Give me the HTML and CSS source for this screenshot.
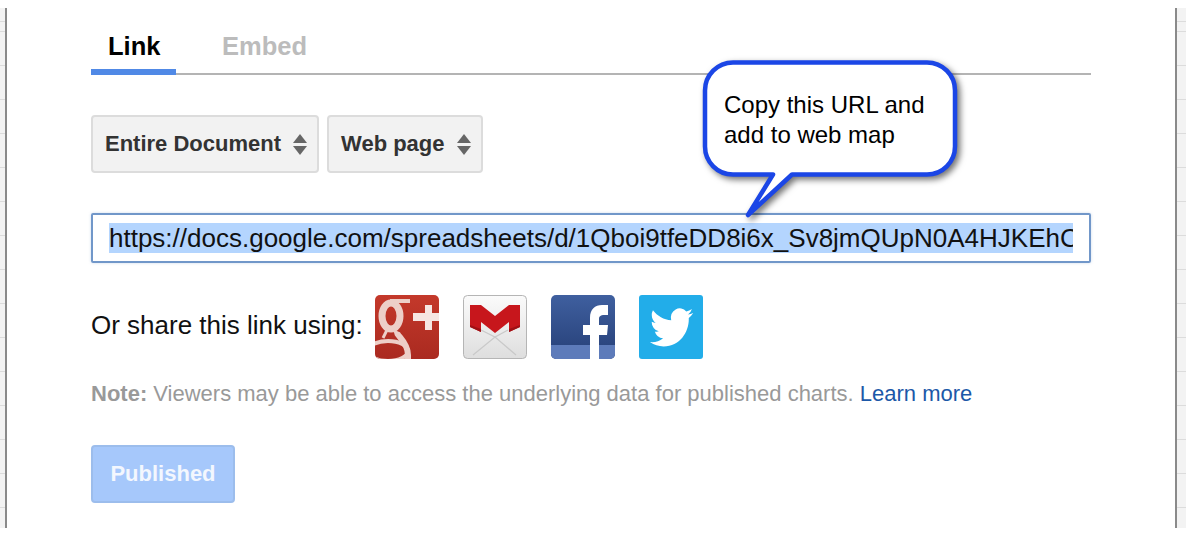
FILE: index.html
```html
<!DOCTYPE html>
<html lang="en">
<head>
<meta charset="utf-8">
<title>Publish to the web</title>
<link rel="stylesheet" href="styles.css">
</head>
<body>
<div class="sheet">
  <main class="dialog">
    <nav class="tabs">
      <a class="tab tab-active">Link</a>
      <a class="tab tab-idle">Embed</a>
    </nav>
    <div class="selects">
      <div class="select">Entire Document
        <span class="arrows"><i class="arrow-up"></i><i class="arrow-down"></i></span>
      </div>
      <div class="select">Web page
        <span class="arrows"><i class="arrow-up"></i><i class="arrow-down"></i></span>
      </div>
    </div>
    <div class="url-box">
      <div class="url-text">https://docs.google.com/spreadsheets/d/1Qboi9tfeDD8i6x_Sv8jmQUpN0A4HJKEhC</div>
    </div>
    <div class="share">
      <span class="share-label">Or share this link using:</span>
      <div class="icons">
        <svg class="icon" viewBox="0 0 64 64" aria-label="Google Plus">
          <defs>
            <linearGradient id="gp" x1="0" y1="0" x2="0" y2="1"><stop offset="0" stop-color="#c4392b"/><stop offset="1" stop-color="#aa2a20"/></linearGradient>
            <clipPath id="gpc"><rect width="64" height="64" rx="5"/></clipPath>
          </defs>
          <rect width="64" height="64" rx="5" fill="url(#gp)"/>
          <g fill="none" stroke="#edcfc8" clip-path="url(#gpc)">
            <ellipse cx="16" cy="21" rx="9" ry="13" stroke-width="7"/>
            <path d="M15 6h20" stroke-width="4"/>
            <path d="M12 35 8 43" stroke-width="3"/>
            <path d="M22 36c-2 4 11 10 11 24v4" stroke-width="6"/>
            <ellipse cx="13" cy="56" rx="20" ry="10" stroke-width="4"/>
          </g>
          <path d="M38 18h12V10h7v8h7v8h-7v9h-7v-9H38z" fill="#f6e6e2"/>
        </svg>
        <svg class="icon" viewBox="0 0 64 64" aria-label="Gmail">
          <defs><linearGradient id="gm" x1="0" y1="0" x2="0" y2="1"><stop offset="0" stop-color="#fbfbfb"/><stop offset="1" stop-color="#dedede"/></linearGradient></defs>
          <rect x=".5" y=".5" width="63" height="63" rx="4" fill="url(#gm)" stroke="#b5b5b5"/>
          <path d="M10 60 32 42 53 60M18 35 32 42 45 35" fill="none" stroke="#c9c9c9" stroke-width="1.2"/>
          <path d="M7 10h11l14 11 14-11h11v22l-11 5V27L32 38 18 27v10L7 32z" fill="#c7161c"/>
          <path d="M7 30l11 4v3L7 32zM57 30l-11 4v3l11-5z" fill="#9f1015"/>
        </svg>
        <svg class="icon" viewBox="0 0 64 64" aria-label="Facebook">
          <defs><linearGradient id="fb" x1="0" y1="0" x2="0" y2="1"><stop offset="0" stop-color="#3f5f9f"/><stop offset="1" stop-color="#263f77"/></linearGradient></defs>
          <rect width="64" height="64" rx="5" fill="url(#fb)"/>
          <path d="M0 50h64v9a5 5 0 0 1-5 5H5a5 5 0 0 1-5-5z" fill="#5d7bba"/>
          <path d="M39 64V40h-7V30h7v-7c0-9 5-13 12-13h6v10h-4c-3 0-5 1-5 4v6h9l-1 10h-8v24z" fill="#fff"/>
        </svg>
        <svg class="icon" viewBox="0 0 64 64" aria-label="Twitter">
          <rect width="64" height="64" rx="3" fill="#22ade9"/>
          <path transform="translate(11 9) scale(1.8 1.95)" fill="#fff" d="M23.953 4.57a10 10 0 01-2.825.775 4.958 4.958 0 002.163-2.723c-.951.555-2.005.959-3.127 1.184a4.92 4.92 0 00-8.384 4.482C7.69 8.095 4.067 6.13 1.64 3.162a4.822 4.822 0 00-.666 2.475c0 1.71.87 3.213 2.188 4.096a4.904 4.904 0 01-2.228-.616v.06a4.923 4.923 0 003.946 4.827 4.996 4.996 0 01-2.212.085 4.936 4.936 0 004.604 3.417 9.867 9.867 0 01-6.102 2.105c-.39 0-.779-.023-1.17-.067a13.995 13.995 0 007.557 2.209c9.053 0 13.998-7.496 13.998-13.985 0-.21 0-.42-.015-.63A9.935 9.935 0 0024 4.59z"/>
        </svg>
      </div>
    </div>
    <p class="note"><b>Note:</b> Viewers may be able to access the underlying data for published charts. <a class="learn">Learn more</a></p>
    <div class="publish">Published</div>
  </main>
</div>
<aside class="callout">
  <svg class="callout-shape" viewBox="0 0 270 170" aria-hidden="true">
    <path d="M38 7.5H232a28 28 0 0 1 28 28V91.5a28 28 0 0 1-28 28H97L53 160 78 119.5H38a28 28 0 0 1-28-28V35.5a28 28 0 0 1 28-28z"/>
  </svg>
  <p class="callout-text">Copy this URL and<br>add to web map</p>
</aside>
</body>
</html>
```
FILE: styles.css
```css
html, body {
  margin: 0;
  padding: 0;
  background: #fff;
  height: 538px;
  overflow: hidden;
  font-family: "Liberation Sans", Arial, sans-serif;
}
.sheet {
  margin-top: 8px;
  height: 520px;
  padding-left: 5px;
  padding-right: 9px;
  background-color: #f3f3f3;
  background-image: repeating-linear-gradient(to bottom, #dcdcdc 0, #dcdcdc 1px, transparent 1px, transparent 34px);
  background-position: 0 23px;
}
.dialog {
  height: 100%;
  box-sizing: border-box;
  background: #fff;
  border-left: 2px solid #8a8a8a;
  border-right: 2px solid #8a8a8a;
  padding: 12px 0 0 84px;
}
.tabs {
  width: 1000px;
  height: 55px;
  box-sizing: border-box;
  display: flex;
  border-bottom: 2px solid #b4b4b4;
}
.tab {
  font-size: 25.5px;
  font-weight: bold;
  line-height: 28px;
  height: 55px;
  box-sizing: border-box;
  padding-top: 12px;
}
.tab-active {
  width: 85px;
  padding-left: 17px;
  color: #000;
  border-bottom: 6px solid #5089e6;
}
.tab-idle {
  margin-left: 46px;
  color: #bcbcbc;
}
.selects {
  display: flex;
  gap: 8px;
  margin-top: 40px;
}
.select {
  height: 58px;
  box-sizing: border-box;
  display: flex;
  align-items: center;
  gap: 12px;
  padding: 0 10px 0 12px;
  background: #f2f2f2;
  border: 2px solid #dcdcdc;
  border-radius: 4px;
  font-size: 22px;
  font-weight: bold;
  color: #333;
}
.arrows {
  display: flex;
  flex-direction: column;
  gap: 3px;
}
.arrow-up, .arrow-down {
  display: block;
  width: 0;
  height: 0;
  border-left: 7.5px solid transparent;
  border-right: 7.5px solid transparent;
}
.arrow-up { border-bottom: 9px solid #666; }
.arrow-down { border-top: 9px solid #666; }
.url-box {
  width: 1000px;
  height: 50px;
  box-sizing: border-box;
  margin-top: 40px;
  padding: 8px 16px;
  border: 2px solid #7197c9;
  border-radius: 2px;
  box-shadow: 0 0 3px rgba(113, 151, 201, .35);
}
.url-text {
  height: 30px;
  line-height: 30px;
  overflow: hidden;
  white-space: nowrap;
  font-size: 26px;
  color: #111;
  background: #b4d5fe;
}
.share {
  display: flex;
  align-items: center;
  gap: 12px;
  margin-top: 32px;
}
.share-label {
  font-size: 26px;
  color: #111;
  padding-bottom: 4px;
}
.icons {
  display: flex;
  gap: 24px;
}
.icon {
  display: block;
  width: 64px;
  height: 64px;
}
.note {
  margin: 22px 0 0;
  font-size: 22px;
  line-height: 26px;
  color: #999;
}
.learn { color: #1c58a8; }
.publish {
  width: 144px;
  height: 58px;
  box-sizing: border-box;
  margin-top: 38px;
  display: flex;
  align-items: center;
  justify-content: center;
  background: #a6c8fb;
  border: 2px solid #9cbdec;
  border-radius: 4px;
  font-size: 22px;
  font-weight: bold;
  color: #f3f7fe;
}
.callout {
  position: absolute;
  left: 695px;
  top: 55px;
  width: 270px;
  height: 170px;
}
.callout-shape {
  display: block;
  width: 270px;
  height: 170px;
  overflow: visible;
  filter: drop-shadow(3px 3px 3px rgba(0, 0, 0, .55));
}
.callout-shape path {
  fill: #fff;
  stroke: #1b46e6;
  stroke-width: 4.5;
  stroke-linejoin: round;
}
.callout-text {
  position: absolute;
  left: 29px;
  top: 35px;
  margin: 0;
  font-size: 24px;
  line-height: 30px;
  color: #000;
  white-space: nowrap;
}
```
